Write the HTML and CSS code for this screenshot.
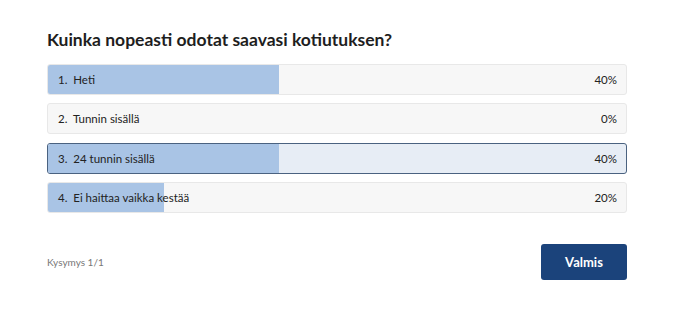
FILE: index.html
```html
<!DOCTYPE html>
<html lang="fi">
<head>
    <meta charset="UTF-8">
    <meta name="viewport" content="width=device-width, initial-scale=1.0">
    <title>Kysely</title>
    <link rel="stylesheet" href="styles.css">
</head>
<body>

<div class="poll">
    <h2 class="question">Kuinka nopeasti odotat saavasi kotiutuksen?</h2>

    <div class="answers">
        <div class="answer">
            <div class="bar" style="width: 40%"></div>
            <span class="label">1.&nbsp; Heti</span>
            <span class="pct">40%</span>
        </div>
        <div class="answer">
            <div class="bar" style="width: 0%"></div>
            <span class="label">2.&nbsp; Tunnin sisällä</span>
            <span class="pct">0%</span>
        </div>
        <div class="answer selected">
            <div class="bar" style="width: 40%"></div>
            <span class="label">3.&nbsp; 24 tunnin sisällä</span>
            <span class="pct">40%</span>
        </div>
        <div class="answer">
            <div class="bar" style="width: 20%"></div>
            <span class="label">4.&nbsp; Ei haittaa vaikka kestää</span>
            <span class="pct">20%</span>
        </div>
    </div>

    <div class="footer">
        <span class="counter">Kysymys 1/1</span>
        <button class="done">Valmis</button>
    </div>
</div>

</body>
</html>
```

FILE: styles.css
```css
body {
    margin: 0;
    background-color: #fff;
    font-family: Lato, "Open Sans", sans-serif;
    color: #222;
}

.poll {
    width: 580px;
    padding: 28px 0 0 47px;
}

.question {
    margin: 0 0 12px 0;
    font-size: 17.5px;
    font-weight: 700;
    line-height: 24px;
    color: #1e1e1e;
}

.answers {
    display: flex;
    flex-direction: column;
    gap: 8.3px;
}

.answer {
    position: relative;
    box-sizing: border-box;
    display: flex;
    justify-content: space-between;
    align-items: center;
    height: 31px;
    padding: 0 9px 0 10px;
    background-color: #f7f7f7;
    border: 1px solid #e8e8e8;
    border-radius: 3px;
    font-size: 11.5px;
    overflow: hidden;
}

.answer.selected {
    background-color: #e7edf5;
    border-color: #4a6280;
}

/* palkki vastausten takana */
.bar {
    position: absolute;
    left: 0;
    top: 0;
    bottom: 0;
    background-color: #a9c4e5;
}

.label,
.pct {
    position: relative;
    color: #222;
}

.footer {
    display: flex;
    justify-content: space-between;
    align-items: center;
    margin-top: 31px;
}

.counter {
    font-size: 10px;
    color: #777;
}

.done {
    width: 86px;
    height: 36px;
    border: none;
    border-radius: 3px;
    background-color: #1b437b;
    color: #fff;
    font-family: Lato, "Open Sans", sans-serif;
    font-size: 13px;
    font-weight: 700;
    cursor: pointer;
}
```
